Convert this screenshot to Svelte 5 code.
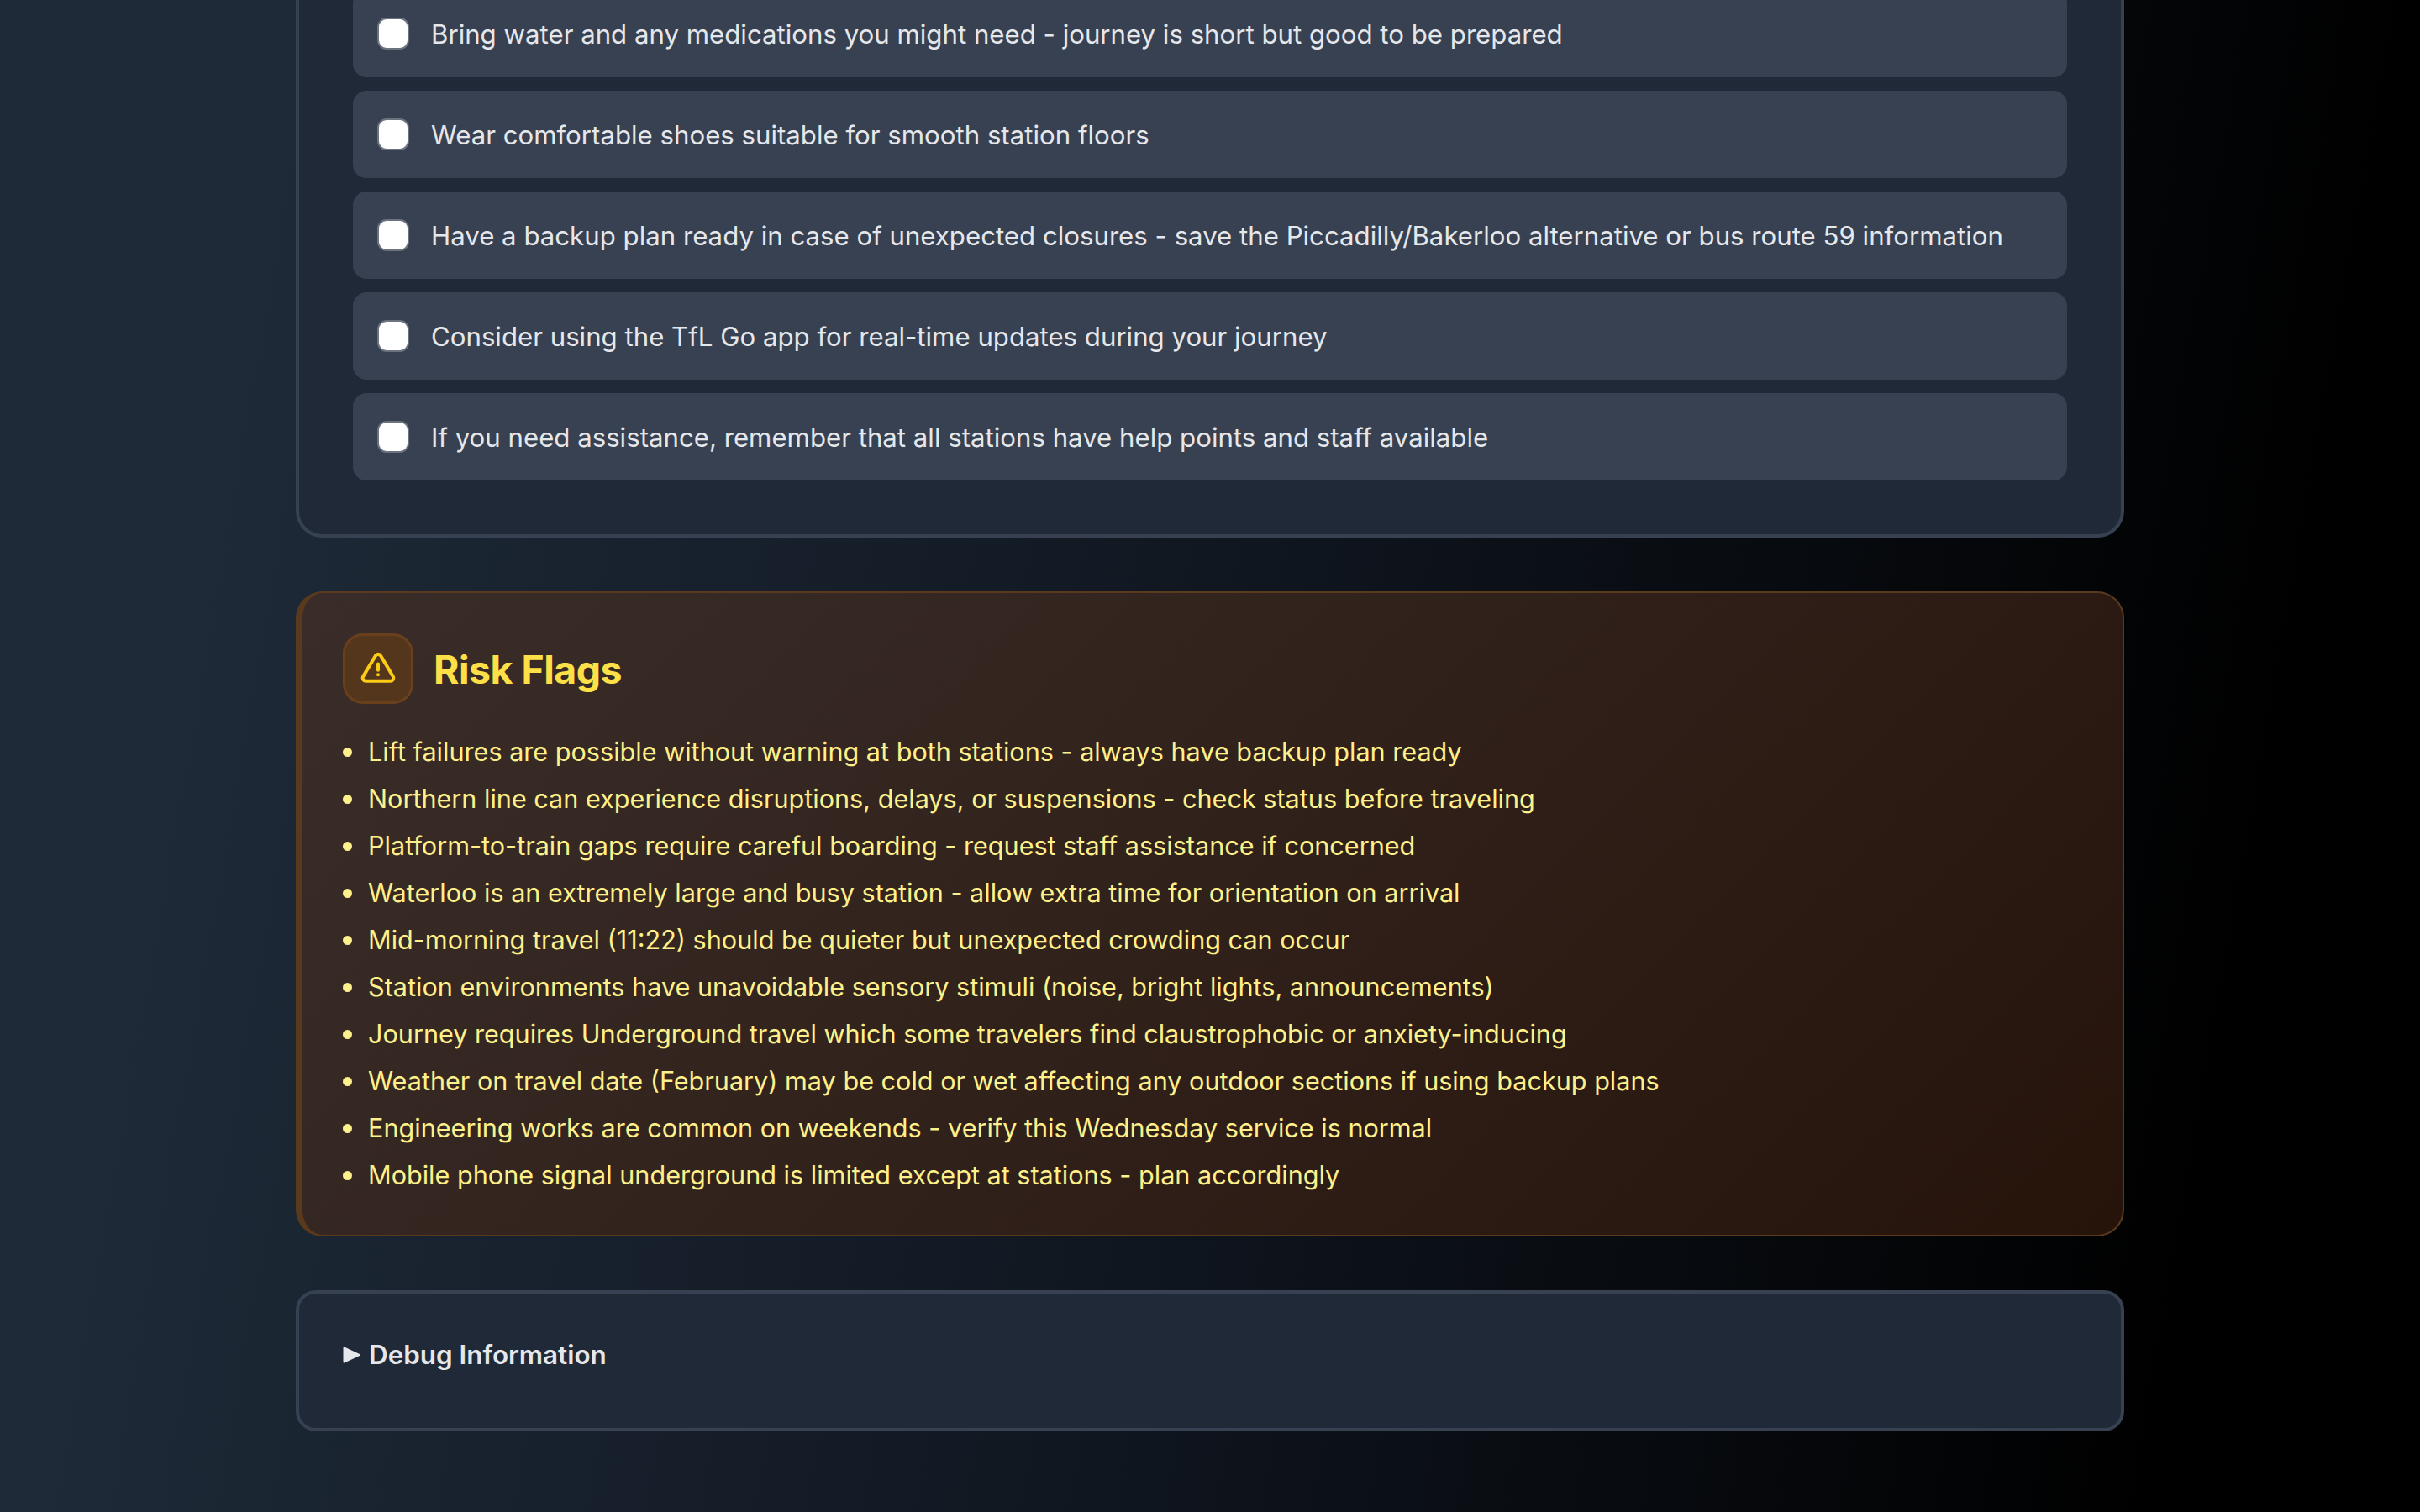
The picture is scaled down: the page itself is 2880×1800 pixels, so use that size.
<script lang="ts">
  /* constants */
  const tips = [
    'Bring water and any medications you might need - journey is short but good to be prepared',
    'Wear comfortable shoes suitable for smooth station floors',
    'Have a backup plan ready in case of unexpected closures - save the Piccadilly/Bakerloo alternative or bus route 59 information',
    'Consider using the TfL Go app for real-time updates during your journey',
    'If you need assistance, remember that all stations have help points and staff available'
  ]
  const risks = [
    'Lift failures are possible without warning at both stations - always have backup plan ready',
    'Northern line can experience disruptions, delays, or suspensions - check status before traveling',
    'Platform-to-train gaps require careful boarding - request staff assistance if concerned',
    'Waterloo is an extremely large and busy station - allow extra time for orientation on arrival',
    'Mid-morning travel (11:22) should be quieter but unexpected crowding can occur',
    'Station environments have unavoidable sensory stimuli (noise, bright lights, announcements)',
    'Journey requires Underground travel which some travelers find claustrophobic or anxiety-inducing',
    'Weather on travel date (February) may be cold or wet affecting any outdoor sections if using backup plans',
    'Engineering works are common on weekends - verify this Wednesday service is normal',
    'Mobile phone signal underground is limited except at stations - plan accordingly'
  ]
</script>

<!-- template -->
<div class="page">
  <section class="card tips">
    {#each tips as tip}
      <label class="tip">
        <input type="checkbox" class="check" />
        <span>{tip}</span>
      </label>
    {/each}
  </section>

  <section class="risk">
    <div class="risk-head">
      <div class="risk-icon">
        <svg width="44" height="44" viewBox="0 0 24 24" fill="none" stroke="#facc15" stroke-width="2.2" stroke-linecap="round" stroke-linejoin="round">
          <path d="M12 9v4" />
          <path d="M10.363 3.591l-8.106 13.534a1.914 1.914 0 0 0 1.636 2.871h16.214a1.914 1.914 0 0 0 1.636 -2.87l-8.106 -13.536a1.914 1.914 0 0 0 -3.274 0z" />
          <path d="M12 16h.01" />
        </svg>
      </div>
      <h2>Risk Flags</h2>
    </div>
    <ul>
      {#each risks as risk}
        <li>{risk}</li>
      {/each}
    </ul>
  </section>

  <details class="card debug">
    <summary>
      <svg class="marker" width="21" height="20" viewBox="0 0 21 20"><path d="M1.5 1.5 19.5 10 1.5 18.5z" fill="#e5e7eb" stroke="#e5e7eb" stroke-width="2" stroke-linejoin="round" /></svg>
      <span>Debug Information</span>
    </summary>
  </details>
</div>

<!-- styles -->
<style>
  :global(body) {
    background: #000;
  }

  /* containers */
  .page {
    box-sizing: border-box;
    height: 1800px;
    overflow: hidden;
    display: flex;
    flex-direction: column;
    justify-content: flex-end;
    gap: 64px;
    padding: 0 352px 96px;
    background: linear-gradient(100deg, #1e2a38 0%, #1e2a38 11%, #111822 47%, #000 90%);
    font-family: Inter, "Liberation Sans", sans-serif;
    font-size: 30.6px;
    line-height: 56px;
    color: #e5e7eb;
  }
  .card {
    flex: none;
    background: #1f2937;
    border: 4px solid #374151;
    border-radius: 32px;
  }

  /* tips */
  .tips {
    display: flex;
    flex-direction: column;
    gap: 16px;
    padding: 64px;
    border-top-left-radius: 0;
    border-top-right-radius: 0;
    font-size: 31.2px;
  }
  .tip {
    display: flex;
    align-items: center;
    gap: 26px;
    height: 104px;
    padding: 0 29px;
    background: #374151;
    border-radius: 16px;
  }
  .tip span {
    position: relative;
    top: 1px;
  }
  .check {
    appearance: none;
    flex: none;
    box-sizing: border-box;
    width: 38px;
    height: 38px;
    margin: 0;
    background: #fff;
    border: 2px solid #6b7280;
    border-radius: 11px;
  }

  /* risk flags */
  .risk {
    flex: none;
    padding: 48px 48px 43px;
    background: linear-gradient(135deg, #3a2d29 0%, #26140b 100%);
    border: 2px solid #5a3a1c;
    border-left-width: 8px;
    border-radius: 32px;
    color: #fef08a;
  }
  .risk-head {
    display: flex;
    align-items: center;
    gap: 24px;
    margin-bottom: 29px;
  }
  .risk-icon {
    box-sizing: border-box;
    width: 84px;
    height: 84px;
    display: flex;
    align-items: center;
    justify-content: center;
    background: #54361d;
    border: 3px solid #693f1c;
    border-radius: 24px;
  }
  h2 {
    margin: 2px 0 0;
    font-size: 46.4px;
    line-height: 64px;
    font-weight: 700;
    letter-spacing: -0.5px;
    color: #fde047;
  }
  ul {
    margin: 0;
    padding: 0;
    list-style: none;
  }
  li {
    display: flex;
    align-items: center;
    gap: 19px;
  }
  li::before {
    content: '';
    flex: none;
    width: 11px;
    height: 11px;
    border-radius: 50%;
    background: #fef08a;
  }

  /* debug */
  .debug {
    box-sizing: border-box;
    height: 168px;
    padding: 45px 52px;
    border-radius: 24px;
  }
  summary {
    display: flex;
    align-items: center;
    gap: 10px;
    list-style: none;
    font-size: 31.4px;
    font-weight: 600;
  }
  .marker {
    flex: none;
  }
</style>
